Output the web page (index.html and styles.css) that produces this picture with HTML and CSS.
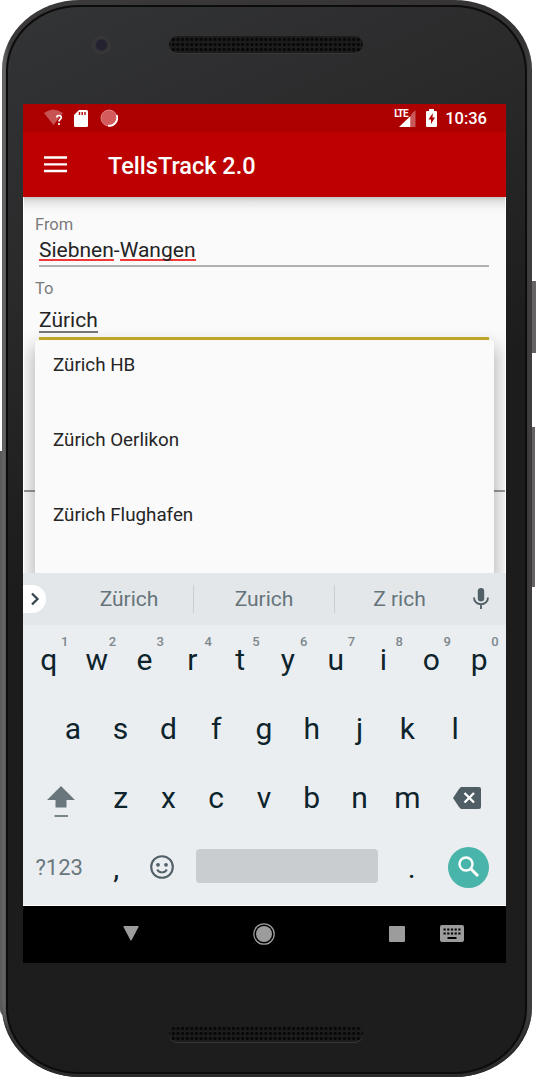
FILE: index.html
```
<!DOCTYPE html>
<html lang="en">
<head>
<meta charset="utf-8">
<title>TellsTrack 2.0</title>
<link rel="stylesheet" href="styles.css">
</head>
<body>
<div class="device">
  <i class="side side-left"></i><i class="side side-power"></i><i class="side side-volume"></i>
  <div class="phone">
    <div class="face">
    <div class="bezel bezel-top"><span class="camera"></span><span class="speaker"></span></div>
    <main class="screen">
      <div class="status">
        <svg class="wifi" width="20" height="18" viewBox="0 0 20 18"><path d="M0 4Q9-3 19 4L9.500 16Z" fill="#fff" opacity=".32"/><path d="M12.700 8.500C12.700 5.800 17.300 5.800 17.300 8.500C17.300 10.500 15 10.400 15 12.500M15 14V16" fill="none" stroke="#fff" stroke-width="1.700"/></svg>
        <svg class="sd" width="14" height="17" viewBox="0 0 14 17"><path d="M5 0H12.500Q14 0 14 1.500V15.500Q14 17 12.500 17H1.500Q0 17 0 15.500V5Z" fill="#fff"/><path d="M5.500 2V5M8.200 2V5M11 2V5" stroke="#b00000" stroke-width="1.400"/></svg>
        <svg class="sync" width="18" height="18" viewBox="0 0 18 18"><circle cx="9" cy="9" r="8" fill="#d45b5b" stroke="#df8080"/><path d="M16.700 6A8 8 0 0 1 8 16.700" fill="none" stroke="#fff" stroke-width="1.800"/></svg>
        <span class="grow"></span>
        <span class="lte"><svg width="17" height="17" viewBox="0 0 17 17"><path d="M16.500 0V17H12V4.500Z" fill="#fff" opacity=".35"/><path d="M0 17L11.500 6V17Z" fill="#fff"/></svg><b>LTE</b></span>
        <svg class="battery" width="11" height="18" viewBox="0 0 11 18"><path d="M3 0H8V2H10Q11 2 11 3V17Q11 18 10 18H1Q0 18 0 17V3Q0 2 1 2H3Z" fill="#fff"/><path d="M6.800 4L2.500 10.500H5V15L9 8.500H6.500Z" fill="#b00000"/></svg>
        <span class="clock">10:36</span>
      </div>
      <header class="appbar">
        <svg width="23" height="17" viewBox="0 0 23 17"><path d="M0 1.500H23M0 8.300H23M0 15H23" stroke="#fff" stroke-width="2.300"/></svg>
        <h1>TellsTrack 2.0</h1>
      </header>
      <section class="content">
        <div class="form">
          <label class="label-from">From</label>
          <div class="field field-from"><span class="misspelt">Siebnen</span>-<span class="misspelt">Wangen</span></div>
          <label class="label-to">To</label>
          <div class="field field-to"><span class="composing">Zürich</span></div>
        </div>
        <ul class="dropdown"><li>Zürich HB</li><li>Zürich Oerlikon</li><li>Zürich Flughafen</li></ul>
        <hr class="divider">
      </section>
      <div class="suggest">
        <span class="expand"><svg width="10" height="14" viewBox="0 0 10 14"><path d="M2 1.500L7.500 7L2 12.500" fill="none" stroke="#37474f" stroke-width="2.300"/></svg></span>
        <span class="word">Zürich</span><span class="word mid">Zurich</span><span class="word">Z rich</span>
        <svg class="mic" width="16" height="22" viewBox="0 0 16 22"><rect x="4.800" y="0" width="6.400" height="13.500" rx="3.200" fill="#526168"/><path d="M1 9.500C1 18.500 15 18.500 15 9.500M8 16.500V21" fill="none" stroke="#526168" stroke-width="1.900"/></svg>
      </div>
      <div class="keyboard">
        <div class="row"><span class="key">q<sup>1</sup></span><span class="key">w<sup>2</sup></span><span class="key">e<sup>3</sup></span><span class="key">r<sup>4</sup></span><span class="key">t<sup>5</sup></span><span class="key">y<sup>6</sup></span><span class="key">u<sup>7</sup></span><span class="key">i<sup>8</sup></span><span class="key">o<sup>9</sup></span><span class="key">p<sup>0</sup></span></div>
        <div class="row row-home"><span class="key">a</span><span class="key">s</span><span class="key">d</span><span class="key">f</span><span class="key">g</span><span class="key">h</span><span class="key">j</span><span class="key">k</span><span class="key">l</span></div>
        <div class="row"><span class="key wide"><svg class="shift" width="28" height="32" viewBox="0 0 28 32"><path d="M14 0L28 14H19.500V21.500H8.500V14H0Z" fill="#69777d"/><path d="M7.500 30H21" stroke="#69777d" stroke-width="1.800"/></svg></span><span class="key">z</span><span class="key">x</span><span class="key">c</span><span class="key">v</span><span class="key">b</span><span class="key">n</span><span class="key">m</span><span class="key wide"><svg width="28" height="22" viewBox="0 0 28 22"><path d="M8 0H26Q28 0 28 2V20Q28 22 26 22H8L6 20L0 11L6 2Z" fill="#4f5e65"/><path d="M11.500 6L21 15.500M21 6L11.500 15.500" stroke="#fff" stroke-width="2.300"/></svg></span></div>
        <div class="row"><span class="key wide symbols">?123</span><span class="key">,</span><span class="key"><svg width="24" height="24" viewBox="0 0 24 24"><circle cx="12" cy="12" r="10.800" fill="none" stroke="#526168" stroke-width="2.100"/><circle cx="8" cy="9.800" r="1.900" fill="#526168"/><circle cx="16" cy="9.800" r="1.900" fill="#526168"/><path d="M7.200 14.500C9 18.300 15 18.300 16.800 14.500" fill="none" stroke="#526168" stroke-width="1.900"/></svg></span><span class="spacebar"></span><span class="key">.</span><span class="key wide"><span class="search"><svg width="22" height="22" viewBox="0 0 22 22"><circle cx="8" cy="8" r="6.500" fill="none" stroke="#fff" stroke-width="2.400"/><path d="M12.500 12.500L20 20" stroke="#fff" stroke-width="3"/></svg></span></span></div>
      </div>
      <nav class="nav">
        <svg class="back" width="16" height="15" viewBox="0 0 16 15"><path d="M1 0H15Q16 0 15.500 1L8.700 14Q8 15 7.300 14L.5 1Q0 0 1 0Z" fill="#9c9c9c"/></svg>
        <svg class="home" width="22" height="22" viewBox="0 0 22 22"><circle cx="11" cy="11" r="10.200" fill="none" stroke="#9c9c9c" stroke-width="1.300"/><circle cx="11" cy="11" r="8" fill="#9c9c9c"/></svg>
        <svg class="recent" width="16" height="16" viewBox="0 0 16 16"><rect width="16" height="16" rx="1" fill="#9c9c9c"/></svg>
        <svg class="ime" width="24" height="17" viewBox="0 0 24 17"><rect width="24" height="17" rx="2" fill="#9c9c9c"/><path d="M3.500 4.500H21M3.500 8.500H21" stroke="#000" stroke-width="2" stroke-dasharray="2.200 1.500"/><path d="M7.500 13H16.500" stroke="#000" stroke-width="2"/></svg>
      </nav>
    </main>
    <div class="bezel bezel-bottom"><span class="speaker"></span></div>
    </div>
  </div>
</div>
</body>
</html>
```
FILE: styles.css
```
* { box-sizing: border-box; }
body { margin: 0; background: #fff; font-family: Roboto, "Liberation Sans", sans-serif; }
svg { display: block; flex: none; }

/* Device shell */
.device { position: relative; width: 537px; height: 1077px; overflow: hidden; }
.phone { width: 530px; height: 1077px; margin-left: 2px; padding: 5px 5px 3px 4px; border-radius: 78px / 70px; background: linear-gradient(90deg, #777 0, #555 4px, #3b3939 8px, #353333 522px, #454343 530px); position: relative; box-shadow: inset 0 -3px 2px #2c2a2a; }
.face { height: 1069px; padding: 0 14px 0 16px; border: 2px solid #0c0c0c; border-radius: 73px / 66px; background: linear-gradient(155deg, #333436 0, #2a2a2b 22%, #1c1c1c 45%, #1d1d1e 100%); }
.side { position: absolute; background: #656363; }
.side-left { left: 0; top: 451px; width: 6px; height: 565px; background: #5b5b5b; border-radius: 0 0 0 6px; }
.side-power { left: 528px; top: 281px; width: 8px; height: 72px; }
.side-volume { left: 527px; top: 427px; width: 8px; height: 160px; }
.bezel { display: flex; align-items: flex-start; }
.bezel-top { height: 97px; padding: 29px 0 0 67px; }
.camera { width: 20px; height: 20px; margin: -1px 58px 0 0; border-radius: 50%; background: radial-gradient(circle at 52% 50%, #242230 0 5px, #363637 6.500px 9px, transparent 10px); }
.speaker { width: 194px; height: 17px; border-radius: 9px; background: radial-gradient(circle, #080808 0 1.300px, transparent 1.900px) 2px 1px / 4.640px 5px, #1c1c1c; box-shadow: 0 1px 0 #363636; }
.bezel-bottom { padding: 62px 0 0 145px; }

/* Screen */
.screen { display: flex; flex-direction: column; width: 483px; height: 859px; margin-left: -1px; overflow: hidden; }
.status { display: flex; align-items: center; height: 28px; padding: 0 19px 0 21px; background: #ad0000; color: #fff; }
.sd { margin-left: 10px; }
.sync { margin-left: 12px; }
.grow { flex: 1; }
.lte { position: relative; padding-left: 5px; }
.lte b { position: absolute; left: 0; top: -1px; font-size: 10px; line-height: 10px; font-weight: 700; letter-spacing: -.8px; }
.battery { margin-left: 10px; }
.clock { margin-left: 8px; font-size: 16.500px; font-weight: 500; }
.appbar { display: flex; align-items: center; height: 65px; padding-left: 21px; background: #bd0000; color: #fff; }
.appbar h1 { margin: 2px 0 0 41px; font-size: 23.500px; font-weight: 500; }

/* Route form */
.content { position: relative; height: 376px; overflow: hidden; border: solid #fff; border-width: 0 1px; background: linear-gradient(#c4c8c8 0, #e5e5e5 5px, #f6f6f6 12px, #fafafa 17px); }
.form { display: flex; flex-direction: column; padding: 19px 16px 0 11px; }
.form label { color: #7a7a7a; font-size: 16.500px; line-height: 18px; }
.field { margin-left: 4px; color: #242424; font-size: 21px; }
.field-from { height: 33px; padding-top: 4px; border-bottom: 2px solid #b0b0b0; line-height: 24px; }
.label-to { margin-top: 13px; }
.field-to { height: 42px; padding-top: 10px; border-bottom: 3px solid #c9ad2a; line-height: 24px; }
.misspelt { display: inline-block; height: 23px; border-bottom: 2px solid #f03a3a; }
.composing { display: inline-block; height: 25px; border-bottom: 2px solid #777; }
.dropdown { position: relative; z-index: 1; list-style: none; height: 240px; margin: 0 11px; padding: 0 0 0 18px; border-radius: 3px 3px 0 0; background: #fafafa; box-shadow: 0 8px 18px 2px rgba(0,0,0,.28); color: #252525; font-size: 18.800px; }
.dropdown li { height: 75px; padding-top: 13px; line-height: 24px; }
.divider { position: absolute; top: 293px; left: -1px; width: 483px; height: 2px; margin: 0; border: 0; background: #999; }

/* Keyboard */
.suggest { display: flex; align-items: center; height: 52px; background: #e3e7ea; color: #66747a; font-size: 21px; }
.expand { display: grid; place-items: center start; width: 23px; height: 28px; margin-right: 18px; padding-left: 7px; border-radius: 0 14px 14px 0; background: #fff; }
.word { flex: none; width: 129px; height: 28px; line-height: 29px; text-align: center; }
.word:nth-child(2) { padding-left: 1px; }
.mid { width: 142px; border: solid #cbd0d3; border-width: 0 1px; }
.suggest { padding-right: 3px; }
.mic { margin-left: 9px; }
.keyboard { height: 281px; padding: 0 3px 0 2px; border-bottom: 1px solid #fff; background: #ebeef1; }
.row { display: flex; height: 69.200px; }
.row-home { padding: 0 23.900px; }
.key { position: relative; display: flex; flex: 1; align-items: center; justify-content: center; color: #0d242c; font-size: 30px; }
.key sup { position: absolute; left: 36px; top: 9px; color: #7c888d; font-size: 13px; line-height: 15px; font-weight: 500; }
.wide { flex: 1.5; }
.shift { margin-top: 8px; }
.symbols { color: #69777d; font-size: 22px; }
.spacebar { flex: 4; height: 34px; margin: 16px 11px 0; border-radius: 4px; background: #c9cdd0; }
.search { display: grid; place-items: center; width: 41px; height: 41px; border-radius: 50%; background: #49b4a9; }

.nav { display: flex; align-items: center; height: 57px; padding: 0 0 2px 100px; background: #000; }
.home { margin-left: 114px; }
.recent { margin-left: 114px; }
.ime { margin-left: 35px; }
```
